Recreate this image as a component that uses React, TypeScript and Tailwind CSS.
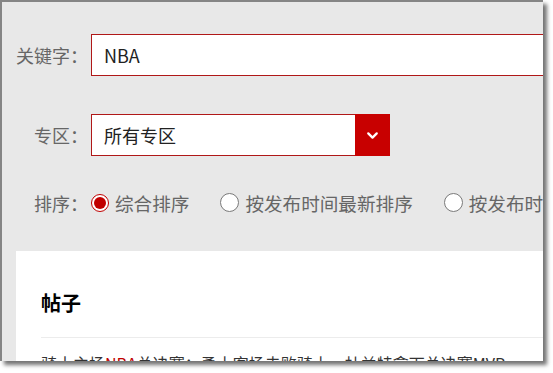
import React from 'react';
import { ChevronDown } from 'lucide-react';

const font = { fontFamily: '"Noto Sans CJK SC", "Noto Sans", sans-serif' };

function Radio({ checked, label }: { checked?: boolean; label: string }) {
  return (
    <label className="flex items-center gap-[6px] shrink-0">
      <span
        className={
          checked
            ? 'w-[18px] h-[18px] rounded-full border border-[#c00000] bg-white flex items-center justify-center'
            : 'w-[19px] h-[19px] rounded-full border border-[#7a7a7a] bg-white'
        }
      >
        {checked && <span className="w-[12px] h-[12px] rounded-full bg-[#c00000]" />}
      </span>
      <span className="text-[18.6px] text-[#666] whitespace-nowrap">{label}</span>
    </label>
  );
}

function Label({ text }: { text: string }) {
  return (
    <span className="w-[89px] shrink-0 text-right text-[18px] text-[#666] pr-[3px] whitespace-nowrap">{text}</span>
  );
}

export default function App() {
  return (
    <div className="w-[553px] h-[373px] bg-white" style={font}>
      <div className="w-[543px] h-[361px] border-t-2 border-l-2 border-[#858585] bg-[#e8e8e8] overflow-hidden shadow-[4px_4px_4px_rgba(0,0,0,0.55)] flex flex-col">
        <div className="pt-[32px] flex flex-col">
          <div className="flex items-center h-[42px]">
            <Label text="关键字：" />
            <div className="w-[520px] h-[42px] shrink-0 bg-white border border-[#b01818] flex items-center px-[12px] text-[18px] text-[#222]">
              NBA
            </div>
          </div>
          <div className="flex items-center h-[42px] mt-[38px]">
            <Label text="专区：" />
            <div className="w-[264px] h-[42px] shrink-0 bg-white border border-[#b01818] border-r-0 flex items-center px-[12px] text-[18px] text-[#222]">
              所有专区
            </div>
            <div className="w-[35px] h-[42px] shrink-0 bg-[#c80000] flex items-center justify-center">
              <ChevronDown className="w-[17px] h-[17px] text-white" strokeWidth={3.2} />
            </div>
          </div>
          <div className="flex items-center h-[42px] mt-[26px]">
            <Label text="排序：" />
            <div className="flex items-center gap-[31px]">
              <Radio checked label="综合排序" />
              <Radio label="按发布时间最新排序" />
              <Radio label="按发布时间最早排序" />
            </div>
          </div>
        </div>
        <div className="mt-[27px] ml-[14px] w-[620px] bg-white flex-1 px-[25px] pt-[38px]">
          <h2 className="text-[20px] font-bold text-black leading-[28px]">帖子</h2>
          <div className="mt-[20px] border-t border-[#ececec]" />
          <p className="mt-[13px] text-[16px] text-[#333] whitespace-nowrap">
            骑士主场<span className="text-[#c00000]">NBA</span>总决赛：勇士客场击败骑士，杜兰特拿下总决赛MVP
          </p>
        </div>
      </div>
    </div>
  );
}
